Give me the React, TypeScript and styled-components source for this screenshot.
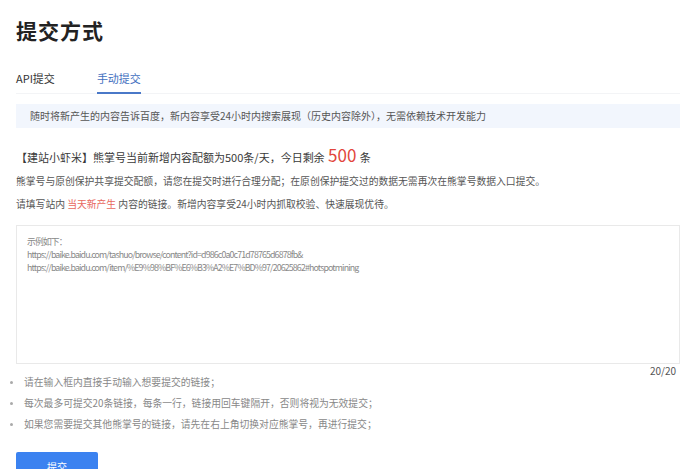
import styled, {createGlobalStyle} from 'styled-components';

const GlobalStyle = createGlobalStyle`
    body {
        margin: 0;
        background: #ffffff;
        font-family: "Noto Sans CJK SC", "Liberation Sans", sans-serif;
    }
`;

const tips = [
    '请在输入框内直接手动输入想要提交的链接；',
    '每次最多可提交20条链接，每条一行，链接用回车键隔开，否则将视为无效提交；',
    '如果您需要提交其他熊掌号的链接，请先在右上角切换对应熊掌号，再进行提交；',
];

const App = () => {
    return (
        <Page>
            <GlobalStyle/>
            <Title>提交方式</Title>

            <Tabs>
                <Tab>API提交</Tab>
                <Tab active>手动提交</Tab>
            </Tabs>

            <Notice>随时将新产生的内容告诉百度，新内容享受24小时内搜索展现（历史内容除外），无需依赖技术开发能力</Notice>

            <Quota>
                【建站小虾米】熊掌号当前新增内容配额为500条/天，今日剩余 <QuotaNum>500</QuotaNum> 条
            </Quota>
            <Desc>熊掌号与原创保护共享提交配额，请您在提交时进行合理分配；在原创保护提交过的数据无需再次在熊掌号数据入口提交。</Desc>
            <Desc>请填写站内 <Hot>当天新产生</Hot> 内容的链接。新增内容享受24小时内抓取校验、快速展现优待。</Desc>

            <Editor
                placeholder={'示例如下：\nhttps://baike.baidu.com/tashuo/browse/content?id=d986c0a0c71d78765d6878fb&\nhttps://baike.baidu.com/item/%E9%98%BF%E6%B3%A2%E7%BD%97/20625862#hotspotmining'}
            />
            <Counter>20/20</Counter>

            <TipList>
                {tips.map((t) => (
                    <Tip key={t}>{t}</Tip>
                ))}
            </TipList>

            <SubmitButton>提交</SubmitButton>
        </Page>
    );
};

export default App;

const Page = styled.div`
    width: 664px;
    padding: 14px 20px 0 16px;
`;

const Title = styled.h1`
    margin: 0;
    font-size: 21px;
    line-height: 32px;
    font-weight: 700;
    letter-spacing: 1px;
    color: #222222;
`;

const Tabs = styled.div`
    display: flex;
    gap: 42px;
    margin-top: 20px;
    border-bottom: 1px solid #f3f4f6;
`;

const Tab = styled.div<{active?: boolean}>`
    font-size: 11px;
    line-height: 16px;
    padding: 4px 0 6px;
    color: ${(p) => (p.active ? '#3f6fc0' : '#333333')};
    border-bottom: 2px solid ${(p) => (p.active ? '#4a78c8' : 'transparent')};
    margin-bottom: -1px;
`;

const Notice = styled.div`
    margin-top: 10px;
    height: 24px;
    line-height: 24px;
    padding-left: 14px;
    background: #f2f6fd;
    font-size: 10px;
    color: #555555;
`;

const Quota = styled.div`
    margin-top: 17px;
    font-size: 11px;
    line-height: 20px;
    color: #3a3a3a;
`;

const QuotaNum = styled.span`
    font-size: 17px;
    color: #e2453c;
    margin: 0 1px;
`;

const Desc = styled.p`
    margin: 5px 0 0;
    font-size: 9.8px;
    line-height: 18px;
    color: #555555;
`;

const Hot = styled.span`
    color: #e8685e;
`;

const Editor = styled.textarea`
    display: block;
    box-sizing: border-box;
    width: 100%;
    height: 139px;
    margin-top: 12px;
    padding: 9px 10px;
    border: 1px solid #e9e9e9;
    resize: none;
    outline: none;
    font-family: "Noto Sans CJK SC", "Liberation Sans", sans-serif;
    font-size: 8.8px;
    line-height: 13px;
    letter-spacing: -0.85px;
    word-spacing: 2px;

    &::placeholder {
        color: #888888;
    }
`;

const Counter = styled.div`
    text-align: right;
    font-size: 10px;
    line-height: 14px;
    color: #555555;
    padding-right: 4px;
`;

const TipList = styled.ul`
    margin: -6px 0 0;
    padding: 0;
    list-style: none;
`;

const Tip = styled.li`
    position: relative;
    padding-left: 8px;
    font-size: 9.8px;
    line-height: 21px;
    color: #888888;

    &::before {
        content: '';
        position: absolute;
        left: -6px;
        top: 9px;
        width: 3px;
        height: 3px;
        border-radius: 50%;
        background: #aaaaaa;
    }
`;

const SubmitButton = styled.button`
    display: block;
    margin-top: 17px;
    width: 82px;
    height: 28px;
    border: none;
    border-radius: 2px;
    background: #3b82f0;
    color: #ffffff;
    font-family: "Noto Sans CJK SC", "Liberation Sans", sans-serif;
    font-size: 10px;
`;
